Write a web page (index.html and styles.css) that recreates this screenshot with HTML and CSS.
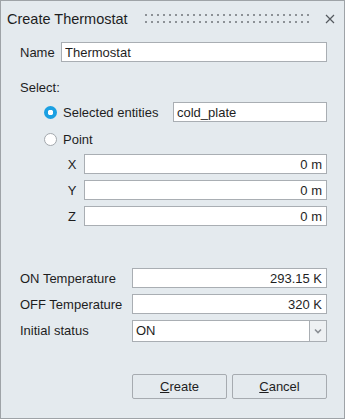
FILE: index.html
```html
<!DOCTYPE html>
<html lang="en">
<head>
<meta charset="UTF-8" />
<title>Create Thermostat</title>
<link rel="stylesheet" href="styles.css">
</head>
<body>
  <div class="dialog">
    <div class="titlebar">
      <span class="title">Create Thermostat</span>
      <span class="grip"><span></span><span></span></span>
      <button class="close" title="Close">
        <svg width="10" height="10" viewBox="0 0 10 10"><path d="M1 1L9 9M9 1L1 9" stroke="#555a5f" stroke-width="1.2" fill="none"/></svg>
      </button>
    </div>

    <div class="content">
      <div class="row name-row">
        <label>Name</label>
        <input type="text" class="field" value="Thermostat" />
      </div>

      <div class="section-label">Select:</div>

      <div class="row radio-row first">
        <span class="radio checked"></span>
        <span class="radio-text">Selected entities</span>
        <input type="text" class="field entities" value="cold_plate" />
      </div>
      <div class="row radio-row second">
        <span class="radio"></span>
        <span class="radio-text">Point</span>
      </div>

      <div class="coords">
        <div class="row coord"><label>X</label><input type="text" class="field num" value="0 m" /></div>
        <div class="row coord"><label>Y</label><input type="text" class="field num" value="0 m" /></div>
        <div class="row coord"><label>Z</label><input type="text" class="field num" value="0 m" /></div>
      </div>

      <div class="props">
        <label>ON Temperature</label>
        <input type="text" class="field num" value="293.15 K" />
        <label>OFF Temperature</label>
        <input type="text" class="field num" value="320 K" />
        <label>Initial status</label>
        <div class="select">
          <span class="select-value">ON</span>
          <span class="select-arrow">
            <svg width="8" height="6" viewBox="0 0 8 6"><path d="M1 1.5L4 4.5L7 1.5" stroke="#8a8f94" stroke-width="1.6" fill="none"/></svg>
          </span>
        </div>
      </div>

      <div class="actions">
        <button class="btn"><u>C</u>reate</button>
        <button class="btn"><u>C</u>ancel</button>
      </div>
    </div>
  </div>
</body>
</html>
```

FILE: styles.css
```css
body {
  margin: 0;
  font-family: "Liberation Sans", Arial, sans-serif;
  font-size: 13px;
  color: #1e1e1e;
  background: #e4eaee;
}
.dialog {
  width: 345px;
  height: 419px;
  box-sizing: border-box;
  border: 1px solid #9ea3a7;
  background: #e4eaee;
}
.titlebar {
  height: 33px;
  display: flex;
  align-items: center;
  padding: 0 8px 0 6px;
}
.title {
  font-size: 14.5px;
  color: #1e1e1e;
  margin-top: 2px;
}
.grip {
  flex: 1;
  display: flex;
  flex-direction: column;
  gap: 5px;
  margin: 2px 12px 0 17px;
}
.grip span {
  height: 2px;
  background-image: linear-gradient(to right, #8c9196 2px, transparent 2px);
  background-size: 6px 2px;
}
.close {
  border: none;
  background: none;
  padding: 0;
  width: 12px;
  height: 12px;
  display: flex;
  align-items: center;
  justify-content: center;
  margin-top: 2px;
}
.content {
  padding: 0 17px 0 19px;
}
.row {
  display: flex;
  align-items: center;
  height: 20px;
}
.field {
  height: 20px;
  box-sizing: border-box;
  border: 1px solid #a9aeb3;
  background: #fff;
  font-family: inherit;
  font-size: 13px;
  color: #1e1e1e;
  padding: 0 4px 0 3px;
  outline: none;
  min-width: 0;
}
.num {
  text-align: right;
}
.name-row {
  margin-top: 8px;
}
.name-row label {
  width: 41px;
  flex: none;
}
.name-row .field {
  flex: 1;
}
.section-label {
  margin-top: 18px;
  line-height: 16px;
}
.radio-row {
  padding-left: 24px;
}
.radio-row.first {
  margin-top: 6px;
}
.radio-row.second {
  margin-top: 7px;
}
.radio {
  width: 13px;
  height: 13px;
  box-sizing: border-box;
  border-radius: 50%;
  border: 1px solid #a3a8ad;
  background: #fff;
  margin-right: 6px;
  flex: none;
}
.radio.checked {
  border: none;
  background: radial-gradient(circle, #fff 0 2.6px, #1ba0e2 3px);
}
.radio-text {
  width: 110px;
  flex: none;
}
.entities {
  flex: 1;
}
.coords {
  padding-left: 44px;
  margin-top: 5px;
  display: flex;
  flex-direction: column;
  gap: 6px;
}
.coord label {
  width: 16px;
  text-align: center;
  margin-right: 4px;
  flex: none;
}
.coord .field {
  flex: 1;
}
.props {
  display: grid;
  grid-template-columns: 112px 1fr;
  grid-auto-rows: 20px;
  row-gap: 6px;
  align-items: center;
  margin-top: 42px;
}
.select {
  height: 22px;
  box-sizing: border-box;
  border: 1px solid #a9aeb3;
  background: #fff;
  display: flex;
  align-items: stretch;
  align-self: start;
}
.select-value {
  flex: 1;
  padding-left: 3px;
  line-height: 20px;
}
.select-arrow {
  width: 16px;
  border-left: 1px solid #a9aeb3;
  background: #eef1f3;
  display: flex;
  align-items: center;
  justify-content: center;
}
.actions {
  display: flex;
  justify-content: flex-end;
  gap: 5px;
  margin-top: 34px;
}
.btn {
  width: 95px;
  height: 25px;
  border: 1px solid #a6abb0;
  border-radius: 2px;
  background: #e4eaee;
  font-family: inherit;
  font-size: 13px;
  color: #1e1e1e;
  padding: 0;
}
```
